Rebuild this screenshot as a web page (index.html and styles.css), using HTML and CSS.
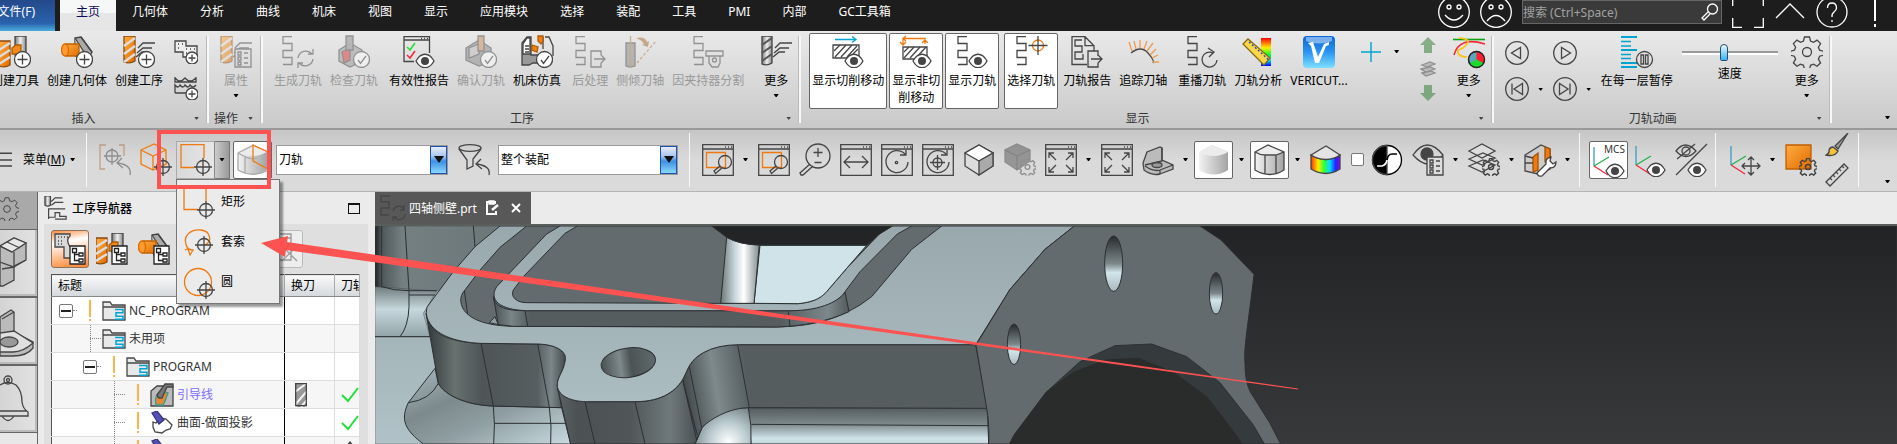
FILE: index.html
```
<!DOCTYPE html>
<html lang="zh-CN">
<head>
<meta charset="utf-8">
<title>四轴侧壁.prt</title>
<link rel="stylesheet" href="styles.css">
</head>
<body>
<svg class="defs" aria-hidden="true">
  <defs>
    <linearGradient id="orange" x1="0" y1="0" x2="1" y2="1"><stop offset="0" stop-color="#ffae42"/><stop offset="1" stop-color="#e06a00"/></linearGradient>
    <linearGradient id="steel" x1="0" y1="0" x2="1" y2="0"><stop offset="0" stop-color="#7a7a7a"/><stop offset=".5" stop-color="#eee"/><stop offset="1" stop-color="#888"/></linearGradient>
    <linearGradient id="pale" x1="0" y1="0" x2="1" y2="0"><stop offset="0" stop-color="#f2f2f2"/><stop offset="1" stop-color="#a4a4a4"/></linearGradient>
    <linearGradient id="rainbow" x1="0" y1="0" x2="1" y2="0"><stop offset="0" stop-color="#f30"/><stop offset=".25" stop-color="#fe0"/><stop offset=".45" stop-color="#3f3"/><stop offset=".65" stop-color="#0df"/><stop offset=".85" stop-color="#22f"/><stop offset="1" stop-color="#80f"/></linearGradient>
    <linearGradient id="heat" x1="0" y1="0" x2="0" y2="1"><stop offset="0" stop-color="#f00"/><stop offset=".35" stop-color="#fe0"/><stop offset=".6" stop-color="#0f3"/><stop offset=".8" stop-color="#0df"/><stop offset="1" stop-color="#00f"/></linearGradient>
    <linearGradient id="blue" x1="0" y1="0" x2="0" y2="1"><stop offset="0" stop-color="#0a66d8"/><stop offset=".5" stop-color="#2a94f0"/><stop offset="1" stop-color="#7fe0ff"/></linearGradient>
  </defs>
  <symbol id="path" viewBox="0 0 32 32"><path d="M11 .7H2V7.5H11V14.5H2V21.5H11V28.5H2"/></symbol>
  <symbol id="eye" viewBox="0 0 32 32"><path d="M13 25c5-9 13-9 18 0c-5 9-13 9-18 0z" fill="#fff"/><circle cx="22" cy="25" r="4" fill="#454545" stroke="none"/></symbol>
  <symbol id="plus" viewBox="0 0 32 32"><circle cx="23.5" cy="23.5" r="8" fill="#fff"/><path d="M23.5 18.500v10M18.500 23.500h10"/></symbol>
  <symbol id="tick" viewBox="0 0 32 32"><circle cx="23.5" cy="23.5" r="8" fill="#fff"/><path d="M20 24l2.500 3.500L28 20"/></symbol>
  <symbol id="drill" viewBox="0 0 32 32"><path d="M1 0h11v25q-5 3-11 1z" fill="url(#orange)" stroke="#8a4a10"/><path d="M1 10L12 2M1 18L12 10M1 26L12 18" stroke="#ddd" stroke-width="2.5"/></symbol>
  <symbol id="greydrill" viewBox="0 0 32 32"><path d="M1 0h10v27q-5 3-10 1z" fill="url(#steel)"/><path d="M1 9l10-7M1 17l10-7M1 25l10-7" stroke="#555" stroke-width="2"/></symbol>
  <symbol id="ops" viewBox="0 0 32 32"><path d="M15 12l5-5h12M14 17l6-5h9M13 21l6-5h6"/></symbol>
  <symbol id="target" viewBox="0 0 32 32"><circle cx="22" cy="22" r="6.5"/><path d="M22 13v18M13 22h18"/></symbol>
  <symbol id="win" viewBox="0 0 32 32"><path d="M.7.7h30.600v30.600H.7zM.7 5h30.600"/><path d="M23 3h1M26 3h1M29 3h1"/></symbol>
  <symbol id="winzoom" viewBox="0 0 32 32"><use href="#win"/><path d="M4.500 8.500h19v15h-19z" stroke="#ee7a11"/><circle cx="23" cy="18" r="6.5"/><path d="M18 22l-6 5 1.500 2.500L20 24"/></symbol>
  <symbol id="arrows" viewBox="0 0 32 32"><use href="#win"/><path d="M4 9l7 7M4 14V9h5M28 9l-7 7M28 14V9h-5M4 28l7-7M4 23v5h5M28 28l-7-7M28 23v5h-5"/></symbol>
  <symbol id="cube" viewBox="0 0 32 32"><path d="M16 1l14 8v13l-14 9L2 22V9z" fill="#ddd"/><path d="M16 1l14 8-14 8L2 9z" fill="#fff"/><path d="M16 17l14-8v13l-14 9z" fill="#aaa"/></symbol>
  <symbol id="cyl" viewBox="0 0 32 32"><path d="M1 8L14 1l16 7v18q-14 9-29 0z" fill="url(#pale)" stroke="none"/><path d="M1 8L14 1l16 7q-14 8-29 0z" fill="#ececec" stroke="none"/></symbol>
  <symbol id="gear" viewBox="0 0 32 32"><path d="M13.500 1h5l1 4 3 1.300 3.600-2.200 3.500 3.500-2.200 3.600 1.200 3 4 1v4l-4 1-1.200 3 2.200 3.600-3.500 3.500-3.600-2.200-3 1.200-1 4h-5l-1-4-3-1.200-3.600 2.200-3.500-3.500 2.200-3.600-1.200-3-4-1v-4l4-1 1.200-3L2.400 7.600l3.500-3.500 3.600 2.200 3-1.300z"/><circle cx="16" cy="16" r="4.5"/></symbol>
  <symbol id="list" viewBox="0 0 32 32"><path d="M15 13h16v18H15z" fill="#ddd"/><path d="M18 16h3v3h-3zM18 21h3v3h-3zM18 26h3v3h-3zM24 17h4M24 22h4M24 27h4"/></symbol>
  <symbol id="csys" viewBox="0 0 32 32"><path d="M2 2v19" stroke="#3b9cc0"/><path d="M2 21l15-9" stroke="#22b14c"/><path d="M2 21l14 9" stroke="#f02a3c"/></symbol>
  <symbol id="treebox" viewBox="0 0 32 32"><path d="M16 13h15v18H16z" fill="#fff" stroke="#222"/><path d="M18.500 15.500h4v4h-4zM25 20h4v3h-4zM25 26h4v3h-4zM20.500 20v7.500H25M20.500 21.500H25" stroke="#222"/></symbol>
  <symbol id="cone" viewBox="0 0 32 32"><path d="M14 2l6-1 11 15-7 13-5-1-5-10z" fill="#aaa"/><path d="M14 2l9 14-5 12M20 1l11 15" fill="#ddd"/><path d="M4 8h14v12H4z" fill="url(#orange)" stroke="none"/><path d="M4 8h14v12H4" stroke="#c26200"/><ellipse cx="4" cy="14" rx="3.500" ry="6" fill="#ff9a2e" stroke="#d86a00"/></symbol>
  <symbol id="holder" viewBox="0 0 32 32"><path d="M16 0h11v19H16z" fill="url(#steel)"/><path d="M0 5h11v24q-5 3-11 1z" fill="url(#orange)" stroke="#8a4a10"/><path d="M0 14l11-7M0 21l11-7M0 28l11-7" stroke="#ddd" stroke-width="2.5"/><path d="M13 12l4-3h5v9h-9z" fill="#f08a1c" stroke="#b25a00"/></symbol>
  <symbol id="folder" viewBox="0 0 24 20"><path d="M1 1h7l2 3h13v15H1zM1 6h22" fill="#e8e8e8"/><path d="M13 8.500h8v3.300h-7v3.500h7v3h-8" stroke="#00a5cf" stroke-width="1.5"/></symbol>
  <symbol id="mill" viewBox="0 0 24 24"><path d="M1 8l6-5h16v20H1z" fill="#bbb"/><path d="M6 22c-2-8 1-12 6-14l6 2c-2 4-2 8-5 12z" fill="#e08a3a" stroke="#3b9c8a"/><path d="M7 12L15 1h8v3h-6l-5 11q-4 1-5-3z" fill="#777"/></symbol>
  <symbol id="proj" viewBox="0 0 24 24"><path d="M3 11l3 1 4-5 6 1 6 6-2 4-4 1-4 3-7-1-2-5z" fill="#fff"/><path d="M2 2l5-2 7 9-5 4z" fill="#5450b8" stroke="#37347d"/></symbol>
</svg>

<header class="titlebar">
  <button class="file">文件(F)</button>
  <nav class="tabs">
    <a href="#" class="on">主页</a><a href="#">几何体</a><a href="#">分析</a><a href="#">曲线</a><a href="#">机床</a><a href="#">视图</a><a href="#">显示</a><a href="#">应用模块</a><a href="#">选择</a><a href="#">装配</a><a href="#">工具</a><a href="#">PMI</a><a href="#">内部</a><a href="#">GC工具箱</a>
  </nav>
  <div class="tools">
    <button aria-label="满意"><svg class="i32" viewBox="0 0 32 32"><circle cx="16" cy="16" r="15.3"/><circle cx="11" cy="11" r="2"/><circle cx="21" cy="11" r="2"/><path d="M7 19q9 10 18 0"/></svg></button>
    <button aria-label="不满意"><svg class="i32" viewBox="0 0 32 32"><circle cx="16" cy="16" r="15.3"/><circle cx="11" cy="11" r="2"/><circle cx="21" cy="11" r="2"/><path d="M7 25q9-11 18 0"/></svg></button>
    <label class="search"><input type="text" placeholder="搜索 (Ctrl+Space)" aria-label="搜索"><svg viewBox="0 0 18 18"><circle cx="11.5" cy="6" r="5"/><path d="M7 9l-6 6 2 2 6-6"/></svg></label>
    <button aria-label="全屏"><svg class="i32" viewBox="0 0 32 32"><path d="M.7 10V.7H10M22 .7h9.300V10M.7 22v9.300H10M22 31.300h9.300V22"/></svg></button>
    <button aria-label="最小化功能区"><svg class="i32" viewBox="0 0 32 32"><path d="M2 22L16 8l14 14"/></svg></button>
    <button aria-label="帮助"><svg class="i32" viewBox="0 0 32 32"><circle cx="16" cy="16" r="15"/><path d="M11.500 12q0-5 4.500-5t4.500 5q0 2-2.500 4t-2 5M16 24v2"/></svg></button>
    <button class="bang" aria-label="提醒"><svg class="i32" viewBox="0 0 32 32"><path d="M16 3v22M16 28v3" stroke-width="2"/></svg></button>
  </div>
</header>

<section class="ribbon">
  <div class="group g-insert">
    <div class="cmds">
      <button><svg class="i32" viewBox="0 0 32 32"><use href="#holder"/><use href="#plus"/></svg>创建刀具</button>
      <button><svg class="i32" viewBox="0 0 32 32"><use href="#cone"/><use href="#plus"/></svg>创建几何体</button>
      <button><svg class="i32" viewBox="0 0 32 32"><use href="#drill"/><use href="#ops"/><use href="#plus"/></svg>创建工序</button>
      <div class="stack">
        <button aria-label="创建方法"><svg viewBox="0 0 24 24"><path d="M1 1h11v5h11v11H9v-5H1z" fill="#eee"/><path d="M4 4h1M8 4h1M4 8h1M12 9h1M16 9h1M20 9h1M12 13h1"/><circle cx="18" cy="18" r="6" fill="#fff"/><path d="M18 14.500v7M14.500 18h7"/></svg></button>
        <button aria-label="创建程序"><svg viewBox="0 0 24 24"><path d="M1 1v5h21V1M1 2q5 6 10 0q5 6 11 0M1 17V9q3 4 5 0q3 4 5 0q3 4 5 0q3 4 6 0M1 17h13"/><circle cx="18" cy="18" r="6" fill="#fff"/><path d="M18 14.500v7M14.500 18h7"/></svg></button>
      </div>
    </div>
    <div class="foot"><span>插入</span><i class="dd"></i></div>
  </div>
  <div class="group">
    <div class="cmds">
      <button class="wide" disabled><svg class="i32" viewBox="0 0 32 32"><use href="#drill"/><use href="#ops"/><use href="#list"/></svg>属性<i class="dd dark"></i></button>
    </div>
    <div class="foot"><span>操作</span><i class="dd"></i></div>
  </div>
  <div class="group pad-l">
    <div class="cmds">
      <button disabled><svg class="i32" viewBox="0 0 32 32"><use href="#path" x="-1"/><path d="M16 22a8 8 0 0 1 14-4M31 13v5h-5M31 23a8 8 0 0 1-14 4M16 32v-5h5"/></svg>生成刀轨</button>
      <button disabled><svg class="i32" viewBox="0 0 32 32"><path d="M1 14l11-7 12 7v11l-12 6-11-6z" fill="#999"/><path d="M4 16l8-4v12l-6 3z" fill="#d33"/><path d="M8 0h7v14H8z" fill="#888"/><use href="#tick"/></svg>检查刀轨</button>
      <button class="push"><svg class="i32" viewBox="0 0 32 32"><path d="M11 25.500H1V.7h25.500V17M1 4h25.500"/><path d="M18 2.500h1M21 2.500h1M24 2.500h1"/><path d="M4 11l3 3 5-7" stroke="#2bdc3c" stroke-width="1.6"/><path d="M4 19l3 3 5-7" stroke="#f02a3c" stroke-width="1.6"/><use href="#eye"/></svg>有效性报告</button>
      <button disabled><svg class="i32" viewBox="0 0 32 32"><path d="M1 12l13-8 12 8v13l-12 5-13-6z" fill="#888"/><path d="M4 12l10-4v10L4 22z" fill="#bbb"/><path d="M13 0h6v15h-6z" fill="#c98a5a"/><use href="#tick"/></svg>确认刀轨</button>
      <button><svg class="i32" viewBox="0 0 32 32"><path d="M1 29V7l5-6h4v18h8v8h-6l-4 2z" fill="#999"/><path d="M2 8l4-6h3v16H2z" fill="#fff"/><path d="M4 10h4M4 13h4M4 16h4"/><path d="M24 1h4l4 9v10M22 1v12"/><path d="M17 0h5v5l-2 3-3-3z" fill="#f08018" stroke="#b25a00"/><path d="M11 9l6 2-1 5-5-2z" fill="#f08018" stroke="#b25a00"/><use href="#tick"/></svg>机床仿真</button>
      <button class="push" disabled><svg class="i32" viewBox="0 0 32 32"><use href="#path"/><path d="M27 19v-4H17v16h10v-4M20 23h11M27 19l4 4-4 4"/></svg>后处理</button>
      <button disabled><svg class="i32" viewBox="0 0 32 32"><path d="M2 7h9v23q-5 2-9 0z" fill="#888"/><path d="M6.500 0v31" stroke="#b07840"/><path d="M12 2q9-2 11 4l2-1-1 6-6-2 2-1q-2-4-8-6z" fill="#a86a30" stroke="none"/><path d="M13 27L32 5" stroke-dasharray="3 2" stroke="#b07840"/></svg>侧倾刀轴</button>
      <button disabled><svg class="i32" viewBox="0 0 32 32"><use href="#path"/><path d="M14 15h17v5H14zM17 20h11v7l-2 4h-6l-3-4z"/><circle cx="22.5" cy="24" r="2"/></svg>因夹持器分割</button>
      <button class="push2"><svg class="i32" viewBox="0 0 32 32"><use href="#greydrill" x="1"/><use href="#ops"/></svg>更多<i class="dd dark"></i></button>
    </div>
    <div class="foot"><span>工序</span><i class="dd"></i></div>
  </div>
  <div class="group pad-l">
    <div class="cmds">
      <button class="active"><svg class="i32" viewBox="0 0 32 32"><path d="M3 3.500h21M20 .5l4 3-4 3" stroke="#00a5cf"/><path d="M1 9h26v13H1z" fill="#fff"/><path d="M2 15l6-6M3 21L14 9M9 21L20 9M15 21L25 10M21 18l5-5"/><use href="#eye"/></svg>显示切削移动</button>
      <button class="active narrow"><svg class="i32" viewBox="0 0 32 32"><path d="M3 8V2.500h22V8M6 0L3 2.500 6 5M0 6l3 3 3-3M22 7l3-3 3 3" stroke="#ee7a11"/><path d="M3 11h24v12H3z" fill="#fff"/><path d="M4 16l5-5M4 22l10-11M10 22L20 11M16 22l10-11"/><use href="#eye"/></svg>显示非切削移动</button>
      <button class="active"><svg class="i32" viewBox="0 0 32 32"><use href="#path"/><use href="#eye"/></svg>显示刀轨</button>
      <button class="active push"><svg class="i32" viewBox="0 0 32 32"><use href="#path"/><circle cx="23" cy="9.5" r="5.5" stroke="#ee7a11"/><path d="M23 0v19M13.500 9.500h19"/></svg>选择刀轨</button>
      <button><svg class="i32" viewBox="0 0 32 32"><path d="M16 28.500H1V.7h13l9 9V15M14 .7v9h9M11 4H4v6h7v6H4v7h8v-5"/><path d="M27 20v-5H17v16h10v-4M20 23h11M27 19l4 4-4 4"/></svg>刀轨报告</button>
      <button><svg class="i32" viewBox="0 0 32 32"><path d="M4 17q10-8 17 0t5 10"/><path d="M5 15L2 6M9 13L7 5M13 12V4M17 13l3-8M20 15l6-8M23 19l6-6M25 22l6-3M26 26h6" stroke="#ee9a50"/></svg>追踪刀轴</button>
      <button class="push"><svg class="i32" viewBox="0 0 32 32"><use href="#path"/><path d="M27 17a7.500 7.500 0 1 0 4 7M22 12l6 4-5 5"/></svg>重播刀轨</button>
      <button><svg class="i32" viewBox="0 0 32 32"><path d="M19 2h10v28H19z" fill="url(#heat)" stroke="none"/><path d="M1 8l5-5 22 19-6 7z" fill="#f8d848" stroke="#8a6a10"/><path d="M7 6l20 18" stroke="#24c" stroke-dasharray="2 2"/></svg>刀轨分析</button>
      <button><svg class="i32" viewBox="0 0 32 32"><rect width="32" height="32" rx="4" fill="url(#blue)" stroke="none"/><path d="M3 1h26v4q-13 5-26 0z" fill="#fff" opacity=".45" stroke="none"/><path d="M5 7l5-1 5 15 6-13 5-2v3l-3 1-7 17h-4L8 10z" fill="#fff" stroke="none"/></svg>VERICUT...</button>
      <button class="mini" aria-label="点"><svg viewBox="0 0 22 22"><path d="M11 0v22M0 11h22" stroke="#00a5cf" stroke-width="1.6"/></svg></button>
      <button class="mini ddonly" aria-label="点选项"><i class="dd dark"></i></button>
      <div class="stack levels">
        <button disabled aria-label="上移"><svg viewBox="0 0 16 16"><path d="M8 0l8 8h-4v8H4V8H0z" fill="#287a2c" stroke="none"/></svg></button>
        <button disabled aria-label="图层"><svg viewBox="0 0 16 16"><path d="M2 12l9-2 4 2-9 3zM1 8l9-2 5 2-9 3zM2 4l8-3 5 2-8 3z" fill="#999"/></svg></button>
        <button disabled aria-label="下移"><svg viewBox="0 0 16 16"><path d="M8 16l8-8h-4V0H4v8H0z" fill="#287a2c" stroke="none"/></svg></button>
      </div>
      <button><svg class="i32" viewBox="0 0 32 32"><path d="M0 3.500h32" stroke="#12a012" stroke-width="1.6"/><path d="M1 19Q6 0 32 8" stroke="#f02a3c" stroke-width="1.6"/><path d="M6 2q12 1 8 6t-9 6q-1 7 9 7" stroke="#ffc20e" stroke-width="1.6"/><circle cx="23.5" cy="23.5" r="8" fill="#5aa5b8"/><path d="M23.500 15.500a8 8 0 0 1 7 12l-7-4z" fill="#ff1e2d" stroke="none"/><path d="M30.500 27.500a8 8 0 0 1-14 0l7-4z" fill="#1bdc2c" stroke="none"/><circle cx="23.5" cy="23.5" r="8" stroke="#222"/></svg>更多<i class="dd dark"></i></button>
    </div>
    <div class="foot"><span>显示</span><i class="dd"></i></div>
  </div>
  <div class="group pad-l">
    <div class="cmds">
      <div class="player">
        <button aria-label="倒放"><svg viewBox="0 0 24 24"><circle cx="12" cy="12" r="11.3"/><path d="M15.500 6.500v11L6.500 12z"/></svg></button><span></span>
        <button aria-label="播放"><svg viewBox="0 0 24 24"><circle cx="12" cy="12" r="11.3"/><path d="M8.500 6.500v11l9-5.500z"/></svg></button><span></span>
        <button aria-label="上一步"><svg viewBox="0 0 24 24"><circle cx="12" cy="12" r="11.3"/><path d="M17.500 6.500v11L9 12zM7 6.500v11"/></svg></button><i class="dd dark"></i>
        <button aria-label="下一步"><svg viewBox="0 0 24 24"><circle cx="12" cy="12" r="11.3"/><path d="M6.500 6.500v11L15 12zM17 6.500v11"/></svg></button><i class="dd dark"></i>
      </div>
      <button><svg class="i32" viewBox="0 0 32 32"><path d="M0 1h16M0 14h16M0 27h16M0 31h16" stroke="#00a5cf" stroke-width="2"/><path d="M0 5.500h10M0 10h10M0 18.500h10M0 22.500h10" stroke="#00a5cf"/><circle cx="23.5" cy="23.5" r="8"/><path d="M20 19h2.500v9H20zM24.500 19H27v9h-2.500z"/></svg>在每一层暂停</button>
      <label class="speed"><input type="range" min="0" max="100" value="44">速度</label>
      <button class="push2"><svg class="i32" viewBox="0 0 32 32"><use href="#gear"/></svg>更多<i class="dd dark"></i></button>
    </div>
    <div class="foot"><span>刀轨动画</span><i class="dd"></i></div>
  </div>
  <div class="rest"><i class="dd dark"></i></div>
</section>

<section class="toolbar">
  <button class="menu"><svg viewBox="0 0 16 20"><path d="M0 1h16M0 10h16M0 18h16" stroke-width="2"/></svg>菜单(<u>M</u>)<i class="dd dark"></i></button>
  <div class="edge" aria-hidden="true"></div>
  <button class="cell" disabled aria-label="重置选择"><svg class="i32" viewBox="0 0 32 32"><path d="M7 1H1v24h5M20 1h5v11" stroke="#a86a30"/><circle cx="13" cy="12" r="6"/><path d="M13 4v17M5 12h17M31 31q2-10-12-12M23 14l-5 5 6 5"/></svg></button>
  <button class="cell" aria-label="选择体"><svg class="i32" viewBox="0 0 32 32"><path d="M1 6l13-6 12 6v14l-13 6L1 20zM1 6l12 6 13-6M13 12v14" stroke="#ee7a11"/><use href="#target" x="1" y="1"/></svg></button>
  <div class="split">
    <button class="main" aria-label="矩形选择"><svg class="i32" viewBox="0 0 32 32"><path d="M14 23.500H1V.7h23V14" stroke="#ee7a11"/><use href="#target" x="1" y="1"/></svg></button>
    <button class="more" aria-label="选择方式" aria-expanded="true"><i class="dd dark"></i></button>
    <div class="popup">
      <button><svg class="i32" viewBox="0 0 32 32"><path d="M15 20.500H1V0M23 0v12" stroke="#ee7a11"/><use href="#target" x="1" y="-1"/></svg>矩形</button>
      <button><svg class="i32" viewBox="0 0 32 32"><path d="M5 20C-3 6 9 0 18 1s12 11 4 15M5 20l5 1-3 5zM2 21l4-2" stroke="#ee7a11"/><use href="#target" x="-1" y="-6"/></svg>套索</button>
      <button><svg class="i32" viewBox="0 0 32 32"><circle cx="15" cy="13" r="13.5" stroke="#ee7a11"/><use href="#target" x="1" y="-1"/></svg>圆</button>
    </div>
  </div>
  <button class="cell active" aria-label="突出显示"><svg class="i32" viewBox="0 0 32 32"><use href="#cyl"/><path d="M1 9L17 1M1 9v17q14 8 29 1M1 9q7 4 7 3v17M8 13q8 3 12 1" stroke="#aaa"/><path d="M16 1l15 7v17l-15-8zM16 17V1" stroke="#ee7a11"/></svg></button>
  <span class="combo c1"><select aria-label="类型过滤器"><option>刀轨</option></select><i></i></span>
  <button class="cell funnel" aria-label="重置过滤器"><svg class="i32" viewBox="0 0 32 32"><ellipse cx="12" cy="4" rx="11" ry="3.3"/><path d="M1 5l8 11v9l6-3v-7l8-10M31 31q2-9-12-11M23 15l-5 5 6 5"/></svg></button>
  <span class="combo c2"><select aria-label="选择范围"><option>整个装配</option></select><i></i></span>
  <div class="edge" aria-hidden="true"></div>
  <button class="cell" aria-label="适合窗口"><svg class="i32"><use href="#winzoom"/></svg></button><i class="dd dark"></i>
  <button class="cell" aria-label="缩放"><svg class="i32"><use href="#winzoom"/></svg></button>
  <button class="cell" aria-label="放大缩小"><svg class="i32" viewBox="0 0 32 32"><circle cx="19" cy="12" r="12"/><path d="M19 4v9M14.500 8.500h9M15.500 18.500h7M11 20L1 29l1 2h2L14 22"/></svg></button>
  <button class="cell" aria-label="平移"><svg class="i32" viewBox="0 0 32 32"><use href="#win"/><path d="M4 18h24M10 12l-6 6 6 6M22 12l6 6-6 6"/></svg></button>
  <button class="cell" aria-label="旋转"><svg class="i32" viewBox="0 0 32 32"><use href="#win"/><path d="M24 10a11 11 0 1 0 3 8M19 11h6V6"/><circle cx="15.5" cy="18.5" r="1.2"/></svg></button>
  <button class="cell" aria-label="旋转点"><svg class="i32" viewBox="0 0 32 32"><use href="#win"/><path d="M24 10a11 11 0 1 0 3 8M19 11h6V6M15.500 11v15M8 18.500h15"/><circle cx="15.5" cy="18.5" r="4.5"/></svg></button>
  <button class="cell" aria-label="视图方位"><svg class="i32"><use href="#cube"/></svg></button>
  <button class="cell" disabled aria-label="方位设置"><svg class="i32" viewBox="0 0 32 32"><path d="M13 0l13 6v11l-13 9L1 18V6z" fill="#555"/><path d="M1 6l12 6 13-6M13 12v14" stroke="#333"/><svg x="15" y="14" width="17" height="18" viewBox="0 0 32 32" fill="#ccc" stroke-width="2.5"><use href="#gear"/></svg></svg></button>
  <button class="cell" aria-label="布满"><svg class="i32"><use href="#arrows"/></svg></button><i class="dd dark"></i>
  <button class="cell" aria-label="全部适合"><svg class="i32"><use href="#arrows"/></svg></button>
  <button class="cell" aria-label="截面"><svg class="i32" viewBox="0 0 32 32"><path d="M1 19L5 8l13-5 2 1v12l11 5v4l-13 5q-8 2-16-4z" fill="#bbb"/><path d="M20 4v13L3 21M3 22q9 6 15 4l13-5M18 26v4"/><ellipse cx="15" cy="21" rx="5" ry="2.5" fill="#999"/></svg></button><i class="dd dark"></i>
  <button class="cell active" aria-label="着色"><svg class="i32"><use href="#cyl"/></svg></button><i class="dd dark"></i>
  <button class="cell active" aria-label="带边着色"><svg class="i32" viewBox="0 0 32 32"><use href="#cyl"/><path d="M1 8L14 1l16 7v18q-14 9-29 0zM1 8q5 3 10 3h11l8-3M11 11v19M22 11v19"/></svg></button><i class="dd dark"></i>
  <button class="cell" aria-label="面分析"><svg class="i32" viewBox="0 0 32 32"><path d="M1 11q15 9 29 0v14q-14 9-29 0z" fill="url(#rainbow)"/><path d="M1 11L16 2l14 9q-14 9-29 0z" fill="#e4e4e4"/></svg></button>
  <input class="check" type="checkbox" aria-label="透明">
  <button class="cell" aria-label="反差"><svg class="i32" viewBox="0 0 32 32"><circle cx="16" cy="16" r="14.5" fill="#fff" stroke="#000"/><path d="M16 1.500a14.500 14.500 0 0 0 0 29z" fill="#000"/><path d="M6 22h5q4-1 5-6" stroke="#fff" stroke-width="1.6"/><path d="M16 16q1-6 5-6h5" stroke="#000" stroke-width="1.6"/></svg></button>
  <button class="cell" aria-label="显示和隐藏"><svg class="i32" viewBox="0 0 32 32"><path d="M1 11q14-20 30 0-14 18-30 0z"/><circle cx="15" cy="10" r="6" fill="#454545"/><use href="#list"/></svg></button><i class="dd dark"></i>
  <button class="cell" aria-label="图层设置"><svg class="i32" viewBox="0 0 32 32"><path d="M1 22l14-6 12 5-13 7zM1 15l14-6 12 5-13 7zM1 7l13-7 13 7-13 7z" fill="#ddd"/><svg x="14" y="14" width="18" height="18" viewBox="0 0 32 32" fill="#fff" stroke-width="2.5"><use href="#gear"/></svg></svg></button><i class="dd dark"></i>
  <button class="cell" aria-label="编辑截面"><svg class="i32" viewBox="0 0 32 32"><path d="M1 27V11L17 1l9 4v20l-12 5z" fill="#ccc"/><path d="M9 28V13l5-4v17zM21 3l5 2v16l-5-3z" fill="#ee7a11" stroke="#a85200"/><path d="M1 19h8M1 12l8 2"/><path d="M13 29l9-9q-1-6 5-7l-1 4 3 3 3-2q0 6-6 6l-8 8q-4 1-5-3z" fill="#fff"/></svg></button><i class="dd dark"></i>
  <div class="vr"></div>
  <button class="cell active" aria-label="显示 MCS"><svg class="i32" viewBox="0 0 32 32"><use href="#csys" x="-1" y="1"/><use href="#eye" y="2"/><text x="11" y="9" class="mcs">MCS</text></svg></button>
  <button class="cell" aria-label="显示 WCS"><svg class="i32" viewBox="0 0 32 32"><use href="#csys"/><use href="#eye" y="1"/></svg></button>
  <button class="cell" aria-label="切换显示"><svg class="i32" viewBox="0 0 32 32"><path d="M1 7q9-12 20 0-10 11-20 0zM32 0L1 31M2 15L20 0"/><circle cx="11" cy="7" r="4"/><use href="#eye" y="1"/></svg></button>
  <div class="vr"></div>
  <button class="cell" aria-label="WCS 定向"><svg class="i32" viewBox="0 0 32 32"><use href="#csys"/><path d="M22 13v18M13 22h18M19 16l3-3 3 3M19 28l3 3 3-3M16 19l-3 3 3 3M28 19l3 3-3 3"/></svg></button><i class="dd dark"></i>
  <button class="cell" aria-label="对象首选项"><svg class="i32" viewBox="0 0 32 32"><path d="M1 1h25v24H1z" fill="url(#orange)" stroke="#c25e00"/><svg x="14" y="14" width="18" height="18" viewBox="0 0 32 32" fill="#fff" stroke-width="2.5"><use href="#gear"/></svg></svg></button>
  <div class="stack brushes">
    <button aria-label="编辑显示"><svg viewBox="0 0 24 24"><path d="M23 0L10 13l3 3z" fill="#999"/><path d="M8 14l5 4q-3 6-12 4 4-2 3-5 1-3 4-3z" fill="#f5c23a"/></svg></button>
    <button aria-label="测量"><svg viewBox="0 0 24 24"><path d="M1 19L19 1l4 4L5 23zM5 15l2 2M8 12l2 2M11 9l2 2M14 6l2 2M17 3l2 2"/></svg></button>
  </div>
  <div class="vr"></div>
  <i class="dd dark last"></i>
</section>

<main class="work">
  <aside class="rail">
    <button class="short" aria-label="设置"><svg class="r24" viewBox="0 0 32 32"><use href="#gear"/></svg></button>
    <button aria-label="装配导航器"><svg viewBox="0 0 40 52"><path d="M0 9l14-8 12 5v17l-12 7v13l-11 6H0z" fill="#bbb"/><path d="M0 9l14-8 12 5-14 9z" fill="#e8e8e8"/><path d="M0 9l12 6M14 15v14l12-6M2 32l12-2M0 25l14 5V15M7 5l13 6" /></svg></button>
    <button aria-label="约束导航器"><svg viewBox="0 0 40 52"><path d="M0 12l11-7 3 2v20l19 10v6q-6 8-20 8H0z" fill="#bbb"/><path d="M0 28l14-2 19 12q-10 9-20 9H0z" fill="#e0e0e0"/><path d="M14 7L2 14"/><ellipse cx="9" cy="37" rx="9" ry="5" fill="#999"/></svg></button>
    <button aria-label="通知"><svg viewBox="0 0 40 52"><circle cx="8" cy="7" r="4"/><circle cx="8" cy="7" r="1.5"/><path d="M0 12q8-5 16 0 6 6 6 17 1 7 6 10v4H0M0 38h27M2 43q6 9 12 0"/></svg></button>
  </aside>
  <section class="nav">
    <header class="nav-head"><svg class="r24" viewBox="0 0 26 26"><path d="M1 0h6v10q-3 2-6 0z" fill="url(#steel)"/><path d="M8 6l4-4h8M8 10l4-3h9M5 25V14h18M5 23h7v-5h5v4h7v3H12"/></svg><h1>工序导航器</h1><button aria-label="最大化"></button></header>
    <div class="nav-body">
      <div class="views">
        <button class="on" aria-label="程序顺序视图"><svg class="i32" viewBox="0 0 32 32"><path d="M1 1h15v2q-4 3-1 9l2 3v10H10V14H1z" fill="#d8d8d8"/><path d="M4 4h10M4 8h6M4 11h6" stroke-dasharray="1 2"/><use href="#treebox"/></svg></button>
        <button aria-label="机床视图"><svg class="i32" viewBox="0 0 32 32"><use href="#holder"/><use href="#treebox"/></svg></button>
        <button aria-label="几何视图"><svg class="i32" viewBox="0 0 32 32"><use href="#cone"/><use href="#treebox"/></svg></button>
        <button class="last" disabled aria-label="清除"><svg class="i32" viewBox="0 0 32 32"><path d="M3 1h20v26H3zM3 5h20M14 13l15 15M29 13L14 28"/></svg></button>
      </div>
      <table class="tree">
        <colgroup><col><col class="w-tool"><col class="w-path"></colgroup>
        <thead><tr><th>标题</th><th>换刀</th><th>刀轨</th></tr></thead>
        <tbody>
          <tr><td><div class="row"><span class="exp"><button aria-label="折叠"></button></span><b class="bar"></b><svg class="f" viewBox="0 0 24 20"><use href="#folder"/></svg>NC_PROGRAM</div></td><td></td><td></td></tr>
          <tr><td><div class="row"><span class="blank"></span><span class="elbow"></span><svg class="f" viewBox="0 0 24 20"><use href="#folder"/></svg>未用项</div></td><td></td><td></td></tr>
          <tr><td><div class="row"><span class="blank"></span><span class="exp"><button aria-label="折叠"></button></span><b class="bar"></b><svg class="f" viewBox="0 0 24 20"><use href="#folder"/></svg>PROGRAM</div></td><td></td><td></td></tr>
          <tr><td><div class="row guide"><span class="blank"></span><span class="blank"></span><span class="elbow"></span><b class="bar"></b><svg class="m" viewBox="0 0 24 24"><use href="#mill"/></svg>引导线</div></td><td><svg class="bit" viewBox="0 0 12 24"><path d="M0 0h12v22q-6 2-12 0z" fill="#999"/><path d="M0 9l12-9M0 22L12 8M6 24l6-7" stroke="#f4f4f4" stroke-width="2"/><path d="M.7.7h10.600v22H.7z"/></svg></td><td><svg class="ok" viewBox="0 0 18 16"><path d="M1 8l6 6L17 1"/></svg></td></tr>
          <tr><td><div class="row"><span class="blank"></span><span class="blank"></span><span class="elbow"></span><b class="bar"></b><svg class="m" viewBox="0 0 24 24"><use href="#proj"/></svg>曲面-做面投影</div></td><td></td><td><svg class="ok" viewBox="0 0 18 16"><path d="M1 8l6 6L17 1"/></svg></td></tr>
          <tr><td><div class="row"><span class="blank"></span><span class="blank"></span><span class="elbow"></span><b class="bar"></b><svg class="m" viewBox="0 0 24 24"><use href="#proj"/></svg></div></td><td></td><td><svg class="up" viewBox="0 0 18 20"><path d="M9 20V1M5 6l4-5 4 5"/></svg></td></tr>
        </tbody>
      </table>
    </div>
  </section>
  <section class="view">
    <div class="doc-tabs"><div class="doc"><svg class="ghost" viewBox="0 0 26 26"><path d="M10 1H1v6h8v6H1v7h8M13 16a6 6 0 0 1 11-2M24 10v5h-4M25 19a6 6 0 0 1-11 3M13 26v-4h4"/></svg><a href="#">四轴侧壁.prt</a><svg class="pen" viewBox="0 0 14 16"><path d="M10 4V2H2v12h9v-3" stroke-width="2"/><path d="M4 1h5v3H4z" fill="#fff"/><path d="M7 10l6-5" stroke-width="2.5"/></svg><button aria-label="关闭"><svg viewBox="0 0 10 10"><path d="M1 1l8 8M9 1L1 9"/></svg></button></div></div>
    <svg class="scene" viewBox="-15 318 4566 654" preserveAspectRatio="xMinYMin slice" role="img" aria-label="四轴侧壁模型">
      <defs>
        <linearGradient id="sky" x1="0" y1="0" x2="0" y2="1"><stop offset="0" stop-color="#222325"/><stop offset="1" stop-color="#38393b"/></linearGradient>
        <linearGradient id="top" gradientUnits="userSpaceOnUse" x1="0" y1="318" x2="0" y2="972"><stop offset="0" stop-color="#99a8ad"/><stop offset="1" stop-color="#b0c2c7"/></linearGradient>
        <linearGradient id="backwall" x1="0" y1="0" x2="1" y2="0"><stop offset="0" stop-color="#1d2021"/><stop offset=".05" stop-color="#4e5658"/><stop offset=".22" stop-color="#747f81"/><stop offset="1" stop-color="#6c7779"/></linearGradient>
        <linearGradient id="floor" x1="0" y1="0" x2="0" y2="1"><stop offset="0" stop-color="#6f7c7e"/><stop offset=".45" stop-color="#c6d8dd"/><stop offset="1" stop-color="#93a4a9"/></linearGradient>
        <linearGradient id="pillar" x1="0" y1="0" x2="1" y2="0"><stop offset="0" stop-color="#6c7779"/><stop offset=".35" stop-color="#c4d3d7"/><stop offset=".6" stop-color="#fff"/><stop offset="1" stop-color="#7e8b8e"/></linearGradient>
        <linearGradient id="wallL" gradientUnits="userSpaceOnUse" x1="140" y1="0" x2="556" y2="0"><stop offset="0" stop-color="#33393a"/><stop offset=".2" stop-color="#67716f"/><stop offset=".4" stop-color="#4e5557"/><stop offset=".8" stop-color="#565e60"/><stop offset=".9" stop-color="#7b8688"/><stop offset="1" stop-color="#434a4b"/></linearGradient>
        <linearGradient id="boss" gradientUnits="userSpaceOnUse" x1="532" y1="0" x2="965" y2="0"><stop offset="0" stop-color="#5a6365"/><stop offset=".14" stop-color="#4c5254"/><stop offset=".5" stop-color="#505658"/><stop offset=".78" stop-color="#6f797b"/><stop offset="1" stop-color="#444a4c"/></linearGradient>
        <linearGradient id="wallR" gradientUnits="userSpaceOnUse" x1="910" y1="800" x2="1100" y2="770"><stop offset="0" stop-color="#424849"/><stop offset=".5" stop-color="#7e8a8c"/><stop offset="1" stop-color="#555d5f"/></linearGradient>
        <linearGradient id="innerwall" gradientUnits="userSpaceOnUse" x1="340" y1="0" x2="1420" y2="0"><stop offset="0" stop-color="#4a5153"/><stop offset=".05" stop-color="#7a8587"/><stop offset=".1" stop-color="#555d5f"/><stop offset=".8" stop-color="#555d5f"/><stop offset=".93" stop-color="#7c888b"/><stop offset="1" stop-color="#4a5052"/></linearGradient>
        <linearGradient id="trough" x1="0" y1="0" x2="0" y2="1"><stop offset="0" stop-color="#545c5e"/><stop offset=".45" stop-color="#7d898b"/><stop offset=".85" stop-color="#cfe3e9"/><stop offset="1" stop-color="#c2d4da"/></linearGradient>
        <linearGradient id="hole" x1="0" y1="0" x2="1" y2="0"><stop offset="0" stop-color="#4a5152"/><stop offset=".35" stop-color="#7d898b"/><stop offset=".55" stop-color="#4c5354"/><stop offset="1" stop-color="#606a6c"/></linearGradient>
        <linearGradient id="bore" x1="0" y1="0" x2="0" y2="1"><stop offset="0" stop-color="#282b2c"/><stop offset=".5" stop-color="#7b878a"/><stop offset=".66" stop-color="#d2e5ea"/><stop offset="1" stop-color="#a9b9be"/></linearGradient>
        <linearGradient id="blob" x1="0" y1="0" x2="1" y2="1"><stop offset="0" stop-color="#a9bbc0"/><stop offset=".35" stop-color="#7d8a8d"/><stop offset=".6" stop-color="#8f9ea2"/><stop offset="1" stop-color="#c8dbe1"/></linearGradient>
        <radialGradient id="shine" gradientUnits="userSpaceOnUse" cx="1045" cy="965" r="120"><stop offset="0" stop-color="#fff"/><stop offset=".5" stop-color="#b8c9ce"/><stop offset="1" stop-color="#6f7b7e"/></radialGradient>
      </defs>
      <path d="M-15 318H4551V972H-15z" fill="url(#sky)"/>
      <path d="M-15 318H1900V972H-15z" fill="url(#top)"/>
      <path d="M-15 318H360L200 500 170 513H-15z" fill="url(#backwall)"/>
      <path d="M-15 500L170 513 130 580 150 650H-15z" fill="url(#floor)"/>
      <g class="ln"><path d="M5 318V500Q40 512 87 512H170M75 318L87 512V560Q85 620 60 650M87 525H165M280 318L285 380M-15 650H150"/></g>
      <g class="ed">
        <path d="M175 790L165 745 85 848C60 900 75 930 130 972H572L545 863 340 858C250 855 190 820 175 790z" fill="url(#blob)"/>
        <path d="M85 848Q150 840 175 790M345 910H557M340 858Q346 910 341 972M508 862Q516 920 512 972"/>
        <path d="M1105 863H1822L1826 972H1113z" fill="url(#trough)"/><path d="M1114 913L1826 917"/>
        <path d="M965 925C990 890 1040 863 1105 863Q1116 915 1113 972H945z" fill="url(#shine)"/>
        <path d="M138 580C150 640 200 665 300 670L475 672C540 675 560 700 556 720C550 760 530 770 532 800L545 863 340 858C250 855 190 820 175 790z" fill="url(#wallL)"/>
        <path d="M303 670L340 858M473 672L508 862"/>
        <path d="M532 800C540 840 600 845 620 845H765C850 845 890 810 910 775L965 925 945 972H572z" fill="url(#boss)"/>
        <path d="M615 845L645 972M765 845L795 972"/>
        <path d="M908 780C925 745 930 720 970 698Q1010 675 1075 674H1787L1822 865 1105 863C1030 865 970 915 965 925L950 960z" fill="url(#wallR)"/>
        <path d="M1073 674L1108 863M928 740L965 922M908 780L952 945"/>
        <path d="M360 318L285 380 220 455 142 560C130 590 150 662 300 670L475 672C540 675 560 700 556 720C550 760 530 770 532 800C540 840 600 845 620 845H765C850 845 890 810 910 775C925 745 930 720 970 698Q1010 675 1075 674H1787L1890 508 1995 388 2083 318z" fill="url(#top)"/>
        <path d="M440 318L360 382 300 450 255 510C235 530 240 560 260 580C290 610 350 618 400 619L1190 621C1320 618 1380 590 1440 555L1475 530 1595 388 1685 318z" fill="#636b6e"/>
        <path d="M345 590L328 608 355 614z" fill="#8e9ea2"/>
        <path d="M340 530C345 570 400 572 440 572H1230C1330 570 1380 540 1395 515L1407 575C1340 605 1270 618 1190 621L400 619 355 614z" fill="url(#innerwall)"/>
        <path d="M435 572L443 619M1225 574L1230 620M253 512L263 582"/>
        <path d="M540 318L500 342 350 500C325 540 360 570 440 572H1230C1330 572 1380 540 1395 515L1440 455 1552 342 1595 318z" fill="url(#top)"/>
        <path d="M592 318L555 340 430 470 400 510C390 530 410 548 440 548L1255 551C1310 545 1325 530 1340 515L1400 445 1498 342 1537 318z" fill="#636b6e"/>
        <path d="M1122 550L1140 376H1460L1400 445 1340 515C1325 530 1310 545 1255 551z" fill="#cfe3e9"/>
        <path d="M1040 352Q1080 374 1138 375L1122 550H1022z" fill="url(#pillar)"/>
        <path d="M995 318L1040 352Q1080 374 1140 375H1462L1498 342 1537 318z" fill="#232425"/>
        <ellipse cx="745" cy="728" rx="82" ry="44" transform="rotate(-8 745 728)" fill="url(#hole)"/>
      </g>
      <g class="ed" transform="translate(1440 210)">
        <path d="M348 465L450 298 555 178 643 108H1020L1083 150 1182 253C1165 400 1150 480 1155 520C1155 570 1165 600 1180 620L1230 700 1262 762H386C388 720 385 680 380 655z" fill="#636b6e"/>
        <path d="M448 762L462 735 558 607 660 515 765 467 875 462 980 500 1080 578 1180 705 1213 762z" fill="#353b3d"/>
        <path d="M448 762L462 735 558 607 640 545 740 508 835 503 940 545 1042 620 1130 735 1148 762z" fill="#2a2b2b" stroke="none"/>
        <ellipse cx="761" cy="221" rx="27" ry="83" fill="url(#bore)"/>
        <ellipse cx="1068" cy="310" rx="20" ry="62" fill="url(#bore)"/>
        <ellipse cx="462" cy="463" rx="20" ry="61" fill="url(#bore)"/>
      </g>
    </svg>
  </section>
</main>
<svg class="marks" aria-hidden="true"><rect x="159" y="132" width="110" height="55"/><path d="M261 243L288 236 287 242 380 255.500 860 325.500 1298 388.500 1298 389.500 860 329 380 263 286 250 285 257z"/></svg>
</body>
</html>
```
FILE: styles.css
```
* { box-sizing: border-box; }
body {
  margin: 0;
  height: 100vh;
  overflow: hidden;
  display: flex;
  flex-direction: column;
  font: 12px/17px "Noto Sans", "Noto Sans CJK SC", sans-serif;
  color: #000;
  background: #ebebeb;
}
button { font: inherit; color: inherit; border: 0; background: none; padding: 0; margin: 0; }
a { color: inherit; text-decoration: none; }
svg { fill: none; stroke: #454545; stroke-width: 1.3; display: block; flex: none; }
svg svg { fill: inherit; stroke: inherit; stroke-width: 2.5; }
.defs { position: absolute; width: 0; height: 0; }
.i32 { width: 32px; height: 32px; overflow: visible; }
.r24 { width: 24px; height: 24px; }
.dd { display: block; flex: none; width: 15px; height: 3px; background: #444; clip-path: polygon(5px 0, 10px 0, 8px 3px, 7px 3px); }
.dd.dark { background: #000; }

/* Title bar */
.titlebar { flex: none; height: 31px; display: flex; background: #1d1d1d; color: #fff; overflow: hidden; }
.file { width: 55px; padding: 0 20px 8px 0; text-align: right; white-space: nowrap; background: linear-gradient(#24498a, #2a62ac 75%, #4aaee0); margin-right: 5px; display: flex; justify-content: flex-end; align-items: center; }
.tabs { display: flex; }
.tabs a { padding: 3px 16px 0; }
.tabs .on { background: linear-gradient(#f6f8f8 42%, #e6e6e6 42%); color: #0a0a5a; }
.tools { margin-left: auto; display: flex; }
.tools svg { stroke: #fff; }
.tools button { width: 42px; height: 32px; margin-top: -4px; display: flex; justify-content: center; }
.tools .bang { width: 44px; }
.search { width: 200px; height: 24px; margin: 0 5px; display: flex; align-items: center; background: #3a3a3a; border: 1px solid #666; }
.search input { flex: 1; min-width: 0; padding: 0; border: 0; background: none; color: #fff; font: inherit; }
.search input::placeholder { color: #a2a2a2; opacity: 1; }
.search svg { width: 18px; height: 18px; margin-right: 2px; }

/* Ribbon */
.ribbon { flex: none; height: 99px; display: flex; background: linear-gradient(#e9e9e9, #c9c9c9); border-bottom: 2px solid #999; overflow: hidden; }
.group { flex: none; display: flex; flex-direction: column; position: relative; }
.group::after, .vr { content: ""; width: 1px; background: #f8f8f8; }
.group::after { position: absolute; right: 0; top: 5px; bottom: 5px; width: 2px; border-left: 1px solid #bbb; }
.g-insert { margin-left: -22px; padding-left: 10px; }
.g-insert .foot { margin-left: -10px; }
.pad-l > .cmds { padding: 2px 6px 0 8px; }
.cmds { flex: 1; display: flex; align-items: flex-start; gap: 2px; padding-top: 2px; }
.cmds > button { height: 76px; padding: 2px; border: 1px solid transparent; border-radius: 2px; display: flex; flex-direction: column; align-items: center; white-space: nowrap; }
.cmds > button .i32 { margin-bottom: 4px; }
.cmds > button .dd { margin-top: 5px; }
.cmds > .wide { width: 54px; }
.cmds > .narrow { width: 54px; white-space: normal; }
.cmds > .push { margin-left: 3px; }
.cmds > .push2 { margin-left: 8px; }
.cmds > .active { background: #fff; border-color: #666; }
button:disabled { color: #999; }
button:disabled svg { opacity: .5; }
button:disabled svg svg { opacity: 1; }
.foot { display: flex; align-items: center; height: 20px; margin-bottom: 1px; color: #333; }
.foot span { flex: 1; text-align: center; }
.foot .dd { margin-right: 5px; }
.stack { display: flex; flex-direction: column; }
.stack svg { width: 24px; height: 24px; }
.g-insert .stack { gap: 12px; padding: 7px 11px 0 6px; }
.cmds > .mini { padding: 8px 0 0; width: 22px; margin-left: 7px; }
.cmds > .mini svg { width: 20px; height: 20px; }
.cmds > .ddonly { width: 16px; margin-left: 5px; padding-top: 11px; }
.levels { gap: 8px; padding: 4px 12px 0 13px; }
.levels svg { width: 16px; height: 16px; }
.player { display: grid; grid-template-columns: repeat(4, 24px); row-gap: 12px; align-items: center; justify-items: center; padding: 8px 0 0 3px; margin-right: -5px; }
.player svg { width: 24px; height: 24px; }
.speed { width: 96px; margin: 11px 0 0 4px; display: flex; flex-direction: column; align-items: center; gap: 4px; }
.speed input { appearance: none; width: 96px; height: 17px; margin: 0; background: linear-gradient(#999 50%, #fff 50%) center / 100% 4px no-repeat; }
.speed input::-webkit-slider-thumb { appearance: none; width: 8px; height: 17px; border: 1px solid #2b4a70; border-radius: 5px 5px 2px 2px; background: linear-gradient(#e8fbff, #33b6f0); }
.rest { flex: 1; display: flex; justify-content: flex-end; align-items: flex-end; padding: 0 2px 9px; }

/* Selection toolbar */
.toolbar { flex: none; height: 62px; padding-bottom: 2px; display: flex; align-items: center; background: linear-gradient(#c6c6c6, #dadada 50%); border-bottom: 1px solid #b4b4b4; }
.menu { display: flex; align-items: center; white-space: nowrap; width: 86px; }
.menu svg { width: 12px; height: 20px; margin-right: 11px; }
.vr { height: 54px; flex: none; margin: 0 8px 0 4px; }
.cell { flex: none; width: 41px; height: 38px; display: flex; align-items: center; justify-content: center; }
.cell.active { width: 39px; margin: 0 1px; background: #fff; border: 1px solid #666; border-radius: 2px; }
.edge { flex: none; width: 8px; height: 54px; border-left: 1px solid #f8f8f8; }
.split { flex: none; display: flex; position: relative; height: 38px; margin: 0 2px 0 0; }
.split .main { width: 39px; padding-left: 3px; border: 1px solid #aaa; border-right-color: #888; background: linear-gradient(90deg, #d8d8d8, #e6e6e6); }
.split .more { width: 15px; display: flex; align-items: center; justify-content: center; border: 1px solid #777; border-left: 0; background: linear-gradient(90deg, #ccc, #999); }
.popup { position: absolute; z-index: 2; top: 100%; left: 0; width: 104px; height: 125px; padding: 9px 0 0 6px; background: #ebebeb; border: 1px solid #777; box-shadow: 3px 3px 2px #0006; display: flex; flex-direction: column; gap: 8px; }
.popup button { display: flex; gap: 6px; line-height: 26px; height: 32px; }
.combo { flex: none; display: flex; height: 30px; background: #fff; border: 1px solid #999; }
.c1 { width: 172px; margin: 0 5px 0 3px; }
.c2 { width: 180px; margin: 0 11px 0 4px; }
.combo select { flex: 1; min-width: 0; appearance: none; border: 0; padding: 0 2px; font: inherit; background: #fff; color: #000; }
.combo i { width: 17px; border: 1px solid #1c50b4; background: linear-gradient(#e8eefa, #a9c4ee 35%, #3e90e0 55%, #8ad8ff); display: flex; justify-content: center; align-items: center; }
.combo i::after { content: ""; border: 5px solid transparent; border-top: 7px solid #111; border-bottom: 0; }
.check { appearance: none; flex: none; width: 13px; height: 13px; margin: 0 2px 0 5px; background: #fff; border: 1px solid #777; border-radius: 2px; }
.mcs { font-size: 10px; fill: #333; stroke: none; }
.brushes { gap: 6px; margin: 0 5px 0 4px; }
.last { margin: 44px 2px 0 auto; }

/* Work area */
.work { flex: 1; min-height: 0; display: flex; }
.rail { flex: none; width: 38px; display: flex; flex-direction: column; background: #e8e8e8; border-right: 1px solid #666; overflow: hidden; }
.rail button { flex: none; height: 68px; display: flex; align-items: center; background: linear-gradient(90deg, #d4d4d4, #e2e2e2); border: solid #666; border-width: 1px 0; box-shadow: inset -2px -2px 0 #bbb; }
.rail .short { height: 37px; background: #a9a9a9; border: 0; box-shadow: none; padding: 0 0 3px; margin-left: -5px; }
.rail button svg:not(.r24) { width: 40px; height: 52px; }
.nav { flex: none; width: 337px; padding: 0 7px 0 6px; display: flex; flex-direction: column; background: #ebebeb; }
.nav-head { display: flex; align-items: center; height: 32px; flex: none; padding-right: 8px; }
.nav-head h1 { font-size: 12px; font-weight: 500; margin: 0 auto 0 4px; }
.nav-head button { width: 12px; height: 11px; border: 1px solid #111; border-top-width: 2px; }
.nav-body { flex: 1; min-height: 0; background: #dfdfdf; padding: 6px 8px 0 7px; overflow: hidden; }
.views { display: flex; gap: 4px; height: 38px; }
.views button { width: 38px; height: 38px; padding: 2px; border: 1px solid transparent; border-radius: 3px; }
.views .on { border: 1px solid #8a7460; background: linear-gradient(170deg, #ff8a3c, #fff 30%, #ffc8a0 60%, #ff8430); }
.views .last { margin: 0 57px 0 auto; border-color: #bbb; background: #eee; }
.tree { width: 100%; margin-top: 6px; table-layout: fixed; border-collapse: collapse; border: 1px solid #555; background: #fff; }
.w-tool { width: 50px; }
.w-path { width: 25px; }
.tree th { height: 22px; padding: 0 0 0 6px; font-weight: 400; text-align: left; white-space: nowrap; overflow: hidden; background: linear-gradient(#fafafa, #d4d8dc); border-right: 1px solid #aaa; border-bottom: 1px solid #888; }
.tree td { height: 28px; padding: 0 0 0 2px; overflow: hidden; border-right: 1px solid #ddd; border-bottom: 1px solid #ddd; }
.tree td:first-child { border-right: 1px solid #000; }
.tree tr:nth-child(even) td { background: #f6f6f6; }
.row { display: flex; align-items: center; height: 27px; white-space: nowrap; color: #333; }
.guide { color: #7a6cff; }
.row .f { width: 24px; height: 20px; margin-right: 3px; }
.row .m { width: 24px; height: 24px; margin-right: 3px; }
.blank, .exp, .elbow, .bar { flex: none; width: 24px; height: 27px; }
.exp { display: flex; align-items: center; padding-left: 5px; }
.exp button { width: 14px; height: 14px; border: 1px solid #777; border-radius: 2px; background: linear-gradient(#222, #222) center / 10px 2px no-repeat #fff; }
.exp::after { content: ""; width: 4px; border-top: 1px dotted #888; }
.elbow { padding-left: 12px; display: flex; align-items: center; background: repeating-linear-gradient(#888 0 1px, transparent 1px 2px) 12px 0 / 1px 100% no-repeat; }
.elbow::after { content: ""; width: 11px; border-top: 1px dotted #888; }
.bar { background: linear-gradient(#ffb347 17px, transparent 17px 19px, #ffb347 19px) 11px 3px / 2px 21px no-repeat; }
.bit { width: 12px; height: 24px; margin-left: 8px; }
.ok { width: 18px; height: 16px; margin-left: 4px; stroke: #22e03a; stroke-width: 2; }
.up { width: 18px; height: 20px; margin-left: 4px; }
.view { flex: 1; min-width: 0; display: flex; flex-direction: column; }
.doc-tabs { flex: none; height: 34px; border-bottom: 2px solid #5a5e5a; display: flex; }
.doc { width: 156px; background: #585858; color: #fff; display: flex; align-items: center; padding-left: 5px; }
.ghost { width: 26px; height: 26px; margin-right: 3px; }
.pen { width: 14px; height: 16px; margin: 0 12px 0 8px; stroke: #fff; }
.doc button svg { width: 10px; height: 10px; stroke: #fff; stroke-width: 2; }
.scene { flex: 1 1 0; width: 100%; min-height: 0; overflow: hidden; }
.ln, .ed { stroke: #2c3032; stroke-width: 3; stroke-linejoin: round; }

/* Callout drawn over the window */
.marks { position: absolute; left: 0; top: 0; z-index: 5; width: 100%; height: 100%; pointer-events: none; stroke: none; fill: #fc5352; }
.marks rect { fill: none; stroke: #fc5352; stroke-width: 4; }
```
